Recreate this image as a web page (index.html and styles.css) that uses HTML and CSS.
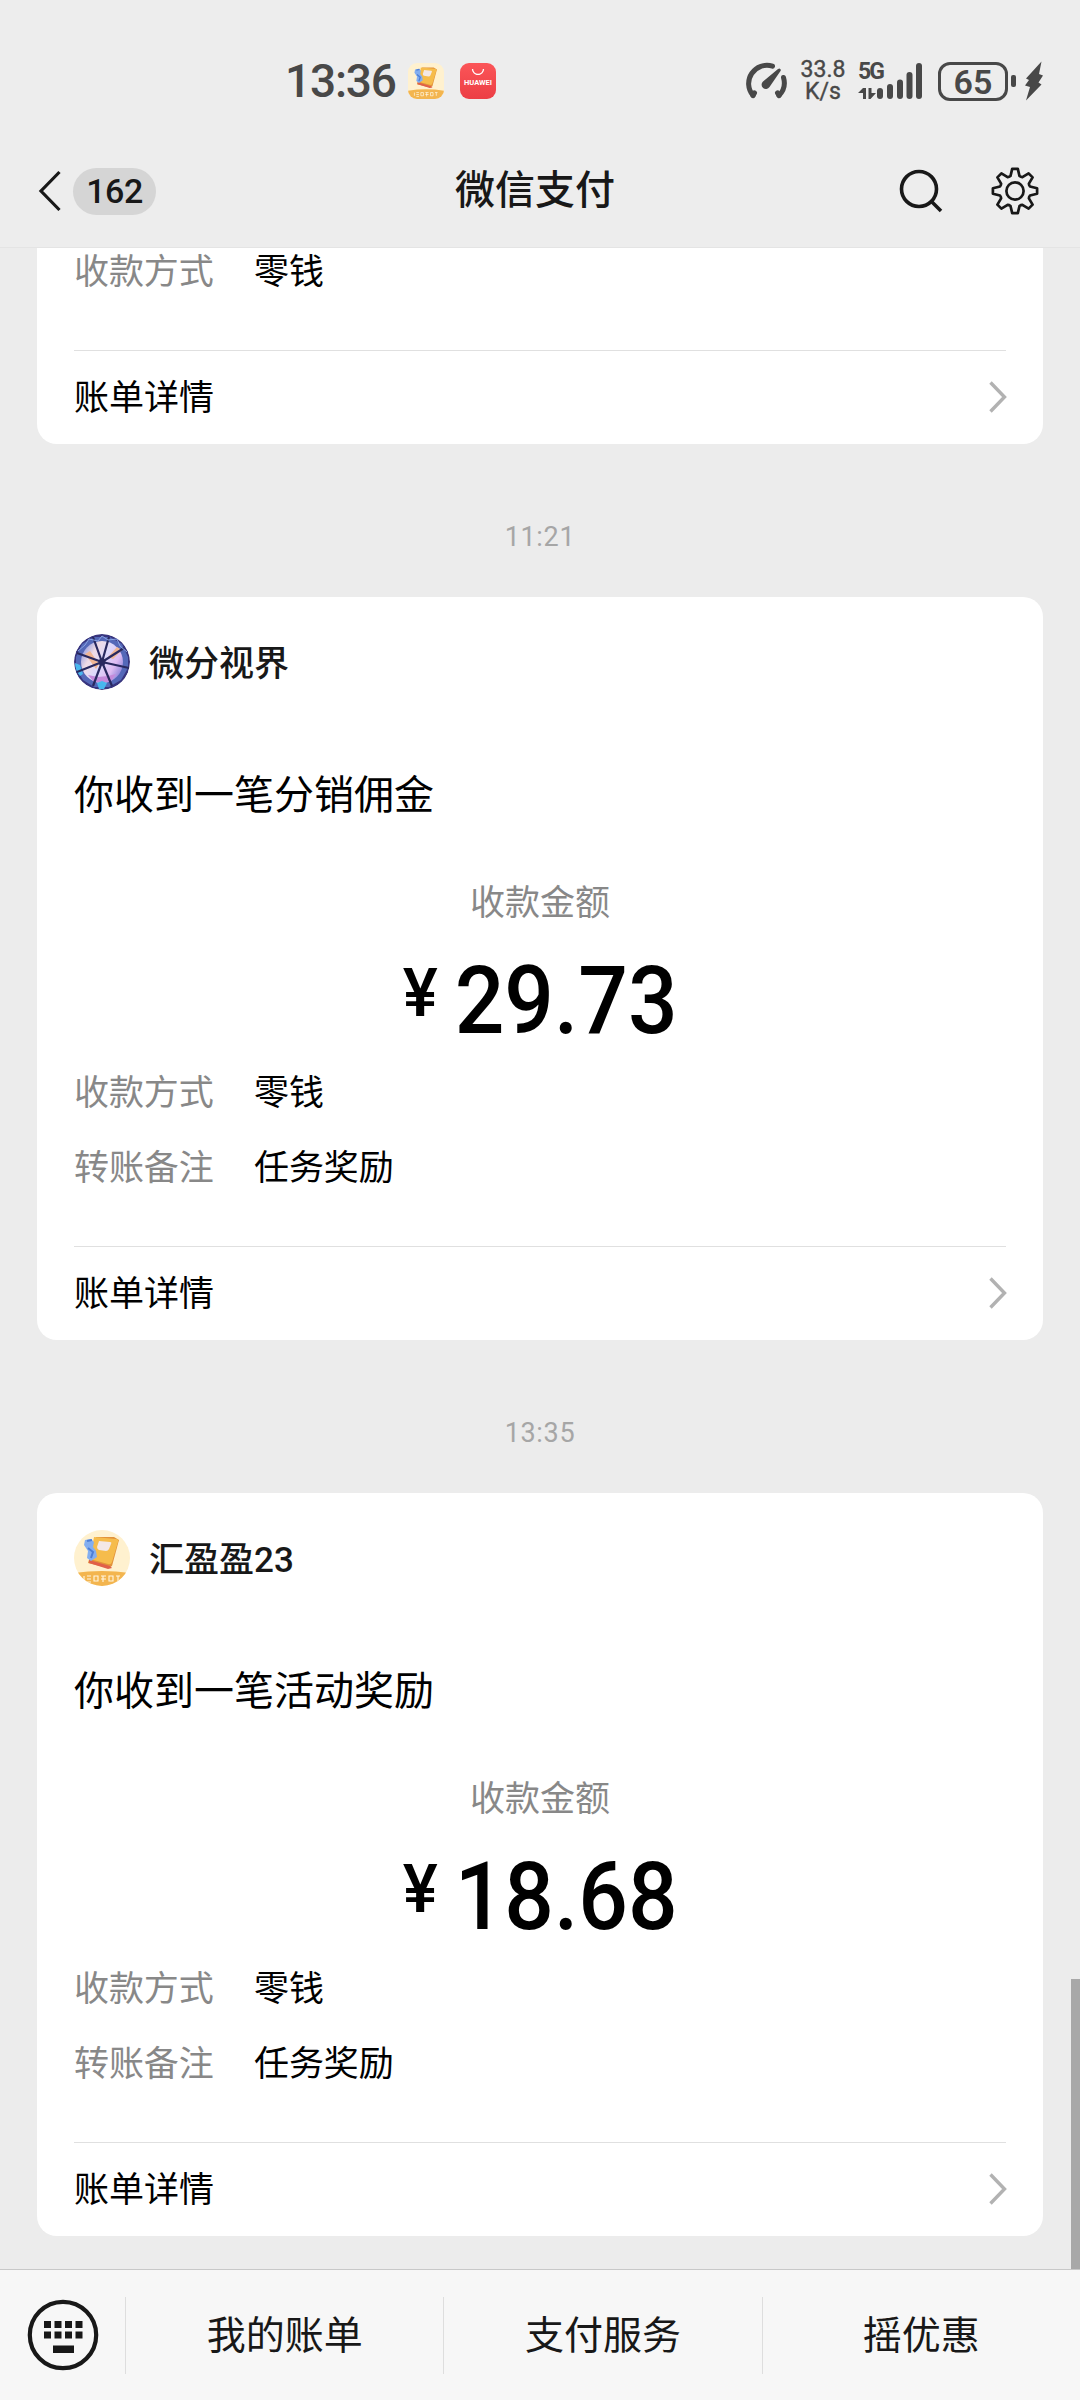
FILE: index.html
```html
<!DOCTYPE html>
<html lang="zh-CN">
<head>
<meta charset="utf-8">
<title>微信支付</title>
<link rel="stylesheet" href="styles.css">
</head>
<body>
<svg class="defs" width="0" height="0">
  <symbol id="chevron" viewBox="0 0 18 32"><path d="M1.500 1.500 15.500 16 1.500 30.500" fill="none" stroke="#b2b2b2" stroke-width="3.400"/></symbol>
  <symbol id="book" viewBox="0 0 56 56">
    <rect width="56" height="56" fill="#fff1cf"/>
    <path d="M22 7h18l5 3-7 26-4 2-20-5z" fill="#e2923a"/>
    <path d="M20 7l22 2q3 0 2 3l-6 20q-1 3-4 2l-18-5z" fill="#f6bc4c"/>
    <path d="M15 30l21 6 2 2-4 1-19-6z" fill="#e0604a"/>
    <path d="M25 11l11 1q2 0 1 2l-2 5q-1 2-3 2l-7-1q-2-1-2-3z" fill="#f4e8e6"/>
    <path d="M11 10l6-1 3 3-1 5 3 4 1 6-6 4-4-3 1-7-4-6z" fill="#83aef0"/>
    <path d="M13 11l5-1M14 18l5 4-2 6" stroke="#4d7ed6" stroke-width="2" fill="none"/>
    <path d="M0 43q28-4 56 0v13H0z" fill="#f3b54f"/>
    <path d="M10 46v5m3-5h4m-4 3h4m-4 3h4m3-6h4v5h-4zm7 0h5m-5 3h5m-3-3v6m6-6h4v5h-4zm7 0h4m-2 0v5" stroke="#fff6e2" stroke-width="1.100" fill="none"/>
  </symbol>
</svg>
<div class="phone">
  <header class="top">
    <div class="status">
      <span class="clock">13:36</span>
      <svg class="app app-book" viewBox="0 0 56 56"><use href="#book"/></svg>
      <span class="app app-store">
        <svg viewBox="0 0 36 12"><path d="M12.500 6a5.500 5.500 0 0 0 11 0" fill="none" stroke="#fff" stroke-width="1.300"/></svg>
        <span class="store-name">HUAWEI</span>
      </span>
      <svg class="gauge" viewBox="0 0 42 38">
        <g fill="none" stroke="#484848" stroke-width="5" stroke-linecap="round"><path d="M8 33.500A18.300 18.300 0 0 1 27.500 4.200M38.500 15.500A18.300 18.300 0 0 1 34 33.500"/><path d="M8 33.500l1.500-2.500M34 33.500l-1.500-2.500"/></g>
        <path d="M34.500 6.500q2 1 1 2.500L24.500 25a4.300 4.300 0 1 1-6.500-5.500L33 7z" fill="#484848"/>
      </svg>
      <span class="speed"><span>33.8</span><span>K/s</span></span>
      <span class="network">
        <span class="net-type">5G</span>
        <svg class="bars" viewBox="0 0 64 37">
          <g fill="#484848"><path d="M5 25h3v11H5v-6H0zM10.500 25h3v5H18l-5.500 6h-2z"/>
          <rect x="19" y="25" width="6" height="11" rx="3"/><rect x="29" y="21" width="6" height="15" rx="3"/><rect x="39" y="16.500" width="6" height="19.500" rx="3"/><rect x="48.500" y="9" width="6" height="27" rx="3"/><rect x="58" y="0" width="6" height="36" rx="3"/></g>
        </svg>
      </span>
      <span class="battery">65</span>
      <span class="nub"></span>
      <svg class="bolt" viewBox="0 0 18 40"><path d="M16.500 0.500 1 17.500 4 19 0 24.500 5 26 1 39.500 16.500 23.500 13.500 21.500 18 14.500 14 13z" fill="#484848"/></svg>
    </div>
    <nav class="nav">
      <div class="nav-side">
        <svg class="back" viewBox="0 0 24 42"><path d="M21.500 2 3 21 21.500 40" fill="none" stroke="#181818" stroke-width="3.200"/></svg>
        <span class="count">162</span>
      </div>
      <h1 class="title">微信支付</h1>
      <div class="nav-side nav-actions">
        <svg class="search" viewBox="0 0 44 44"><g fill="none" stroke="#181818" stroke-width="3.600"><circle cx="20" cy="20" r="17.500"/><path d="M32.500 32.500 42 42"/></g></svg>
        <svg class="gear" viewBox="-25 -25 50 50">
          <g fill="none" stroke="#181818" stroke-width="2.700" stroke-linejoin="round">
          <path d="M-2.800-22.100H2.800L4.500-15Q6-13.800 7.400-13.900L13.600-17.600 17.600-13.600 13.900-7.400Q13.800-6 15-4.500L22.100-2.800V2.800L15 4.500Q13.800 6 13.900 7.400L17.600 13.600 13.600 17.600 7.400 13.900Q6 13.800 4.500 15L2.800 22.100H-2.800L-4.500 15Q-6 13.800-7.400 13.900L-13.600 17.600-17.600 13.600-13.900 7.400Q-13.800 6-15 4.500L-22.100 2.800V-2.800L-15-4.500Q-13.800-6-13.900-7.400L-17.600-13.600-13.600-17.600-7.400-13.900Q-6-13.800-4.500-15z"/>
          <circle r="8.600"/></g>
        </svg>
      </div>
    </nav>
  </header>

  <main class="chat">
    <section class="card card-first">
      <dl class="rows"><div class="row"><dt>收款方式</dt><dd>零钱</dd></div></dl>
      <a class="more"><span>账单详情</span><svg class="chevron"><use href="#chevron"/></svg></a>
    </section>
    <time class="time">11:21</time>
    <section class="card">
      <div class="sender">
        <svg class="avatar" viewBox="-28 -28 56 56">
          <defs><linearGradient id="gem" x1="0" y1="0.200" x2="1" y2="0.800"><stop offset="0" stop-color="#8b96de"/><stop offset="0.250" stop-color="#f0dce6"/><stop offset="0.500" stop-color="#dcd8fb"/><stop offset="0.750" stop-color="#dfbcf2"/><stop offset="1" stop-color="#7b78d4"/></linearGradient></defs>
          <circle r="28" fill="#38357e"/>
          <path d="M-26-5-20-18-8-25 8-25 20-18 26-5 26 6 19 18 7 25-8 25-19 18-26 6z" fill="#5468b8"/>
          <circle r="21" fill="url(#gem)"/>
          <path d="M-17-8l5-3 9 13-3 5zM6-5l9-10 5 3-9 9z" fill="#f0b694"/>
          <path d="M-14 13l10 2 10-1 8-2-5 7-9 2-9-2z" fill="#c48ada"/>
          <path d="M-27 1l5 2 3 9-3 2q-5-6-5-13zM-5 21l5-2 5 2-3 6h-5z" fill="#48b7ee"/>
          <path d="M0 0-9-25M0 0 7-25M0 0 22-14M0 0 27 6M0 0 10 24M0 0-9 24M0 0-25 10M0 0-25-9" stroke="#29295f" stroke-width="2.200"/>
          <circle r="3.500" fill="#29295f"/>
          <path d="M-24-11l7-6 4-6 9 2 4-5 6 4 9-1 3 7 7 6" fill="none" stroke="#8aa4e4" stroke-width="1"/>
        </svg>
        <span>微分视界</span>
      </div>
      <p class="message">你收到一笔分销佣金</p>
      <p class="label">收款金额</p>
      <p class="amount"><span class="yen">¥</span><span class="digits">29.73</span></p>
      <dl class="rows">
        <div class="row"><dt>收款方式</dt><dd>零钱</dd></div>
        <div class="row"><dt>转账备注</dt><dd>任务奖励</dd></div>
      </dl>
      <a class="more"><span>账单详情</span><svg class="chevron"><use href="#chevron"/></svg></a>
    </section>
    <time class="time">13:35</time>
    <section class="card">
      <div class="sender">
        <svg class="avatar" viewBox="0 0 56 56"><use href="#book"/></svg>
        <span>汇盈盈23</span>
      </div>
      <p class="message">你收到一笔活动奖励</p>
      <p class="label">收款金额</p>
      <p class="amount"><span class="yen">¥</span><span class="digits">18.68</span></p>
      <dl class="rows">
        <div class="row"><dt>收款方式</dt><dd>零钱</dd></div>
        <div class="row"><dt>转账备注</dt><dd>任务奖励</dd></div>
      </dl>
      <a class="more"><span>账单详情</span><svg class="chevron"><use href="#chevron"/></svg></a>
    </section>
    <div class="scrollbar"></div>
  </main>

  <footer class="menu">
    <div class="keyboard">
      <svg viewBox="0 0 72 72"><circle cx="36" cy="36" r="33.200" fill="none" stroke="#181818" stroke-width="4.200"/>
      <path d="M17 22h7v7h-7zM27.500 22h7v7h-7zM38 22h7v7h-7zM48.500 22h7v7h-7zM17 32.500h7v7h-7zM27.500 32.500h7v7h-7zM38 32.500h7v7h-7zM48.500 32.500h7v7h-7zM26 46.500h21v7.500H26z" fill="#181818"/></svg>
    </div>
    <a class="menu-item">我的账单</a>
    <a class="menu-item">支付服务</a>
    <a class="menu-item">摇优惠</a>
  </footer>
</div>
</body>
</html>
```
FILE: styles.css
```css
* { box-sizing: border-box; margin: 0; padding: 0; }
body { background: #ededed; }
.defs { display: block; position: absolute; }
svg { display: block; flex: none; }

.phone {
  width: 1080px;
  height: 2400px;
  display: flex;
  flex-direction: column;
  overflow: hidden;
  color: #000;
  font-family: Roboto, "Noto Sans CJK SC", sans-serif;
}

/* status bar and navigation */
.top { height: 248px; background: #ededed; border-bottom: 1px solid #e4e4e4; flex: none; }
.status {
  height: 144px;
  padding: 18px 36px 0 285px;
  display: flex;
  align-items: center;
  color: #484848;
}
.clock { width: 123px; flex: none; font-size: 46px; font-weight: 500; line-height: 54px; letter-spacing: -1.200px; }
.app { width: 36px; height: 36px; flex: none; border-radius: 9px; overflow: hidden; }
.app-store {
  margin-left: 16px;
  background: linear-gradient(#fb5558, #ec3e45);
  color: #fff;
  display: flex;
  flex-direction: column;
  align-items: center;
}
.app-store svg { width: 36px; height: 12px; }
.store-name { font-size: 7.500px; font-weight: 700; line-height: 16px; }
.gauge { width: 42px; height: 38px; margin-left: 249px; }
.speed {
  width: 46px;
  flex: none;
  margin-left: 13px;
  display: flex;
  flex-direction: column;
  align-items: center;
  font-size: 23px;
  line-height: 22.500px;
  -webkit-text-stroke: 0.400px #484848;
}
.network { width: 65px; height: 37px; flex: none; margin-left: 12px; display: grid; }
.network > * { grid-area: 1 / 1; }
.net-type { font-size: 23px; font-weight: 700; line-height: 18px; letter-spacing: -2px; }
.bars { width: 64px; height: 37px; }
.battery {
  width: 70px;
  height: 39px;
  flex: none;
  margin-left: 15px;
  border: 3px solid #484848;
  border-radius: 12px;
  font-size: 34px;
  font-weight: 600;
  line-height: 34px;
  text-align: center;
}
.nub { width: 5px; height: 12px; flex: none; margin-left: 3px; border-radius: 2px; background: #484848; }
.bolt { width: 18px; height: 40px; margin-left: 9px; }

.nav { height: 94px; padding: 0 38px; display: grid; grid-template-columns: 1fr auto 1fr; align-items: center; color: #181818; }
.nav-side { display: flex; align-items: center; }
.back { width: 24px; height: 42px; }
.count {
  width: 83px;
  height: 47px;
  margin-left: 11px;
  border-radius: 24px;
  background: #d5d5d5;
  font-size: 34px;
  font-weight: 500;
  line-height: 47px;
  letter-spacing: -0.500px;
  text-align: center;
}
.title { font-size: 40px; font-weight: 500; line-height: 48px; padding-right: 10px; }
.nav-actions { justify-content: flex-end; gap: 47px; padding-right: 2px; }
.search { width: 44px; height: 44px; }
.gear { width: 50px; height: 50px; }

/* message list */
.chat { position: relative; flex: 1; padding: 0 37px; background: #ececec; }
.card {
  height: 743px;
  padding: 37px 37px 0;
  border-radius: 20px;
  background: #fff;
  display: flex;
  flex-direction: column;
}
.card-first { height: 196px; padding-top: 0; border-radius: 0 0 20px 20px; }
.sender { height: 56px; display: flex; align-items: center; gap: 19px; font-size: 35px; font-weight: 500; line-height: 56px; color: #181818; }
.sender span { padding-top: 5px; }
.avatar { width: 56px; height: 56px; border-radius: 50%; }
.message { margin-top: 79px; font-size: 40px; line-height: 54px; }
.label { margin-top: 57px; font-size: 35px; line-height: 48px; color: #888; text-align: center; }
.amount { height: 116px; margin-top: 15px; display: flex; justify-content: center; align-items: flex-start; font-weight: 500; }
.yen { margin-right: 18px; padding-top: 6px; font-size: 66px; line-height: 90px; letter-spacing: -1px; }
/* slightly condensed figures */
.digits { margin: 0 -10px; font-size: 95px; line-height: 116px; transform: scaleX(0.920); }
.rows { margin-top: -3px; }
.card-first .rows { margin-top: -13px; }
.row { height: 75px; display: flex; font-size: 35px; line-height: 75px; letter-spacing: -0.080px; }
.row dt { width: 180px; color: #888; }
.more {
  height: 94px;
  margin-top: auto;
  border-top: 1px solid #e0e0e0;
  display: flex;
  justify-content: space-between;
  align-items: center;
  font-size: 35px;
  line-height: 92px;
}
.more span { padding-top: 3px; }
.chevron { width: 18px; height: 32px; margin: 0 -1px 1px 0; }
.time { height: 153px; display: block; font-size: 27px; line-height: 187px; letter-spacing: 0.700px; color: #a6a6a6; text-align: center; }
.scrollbar { position: absolute; right: 0; bottom: 0; width: 9px; height: 290px; background: #a8a8a8; }

/* bottom menu */
.menu {
  height: 131px;
  flex: none;
  border-top: 1px solid #c8c8c8;
  background: #f7f7f7;
  color: #181818;
  display: flex;
  align-items: center;
}
.keyboard { width: 125px; padding-left: 27px; }
.keyboard svg { width: 72px; height: 72px; }
.menu-item { flex: 1; height: 77px; border-left: 1px solid #dedede; font-size: 39px; line-height: 79px; text-align: center; }
```
